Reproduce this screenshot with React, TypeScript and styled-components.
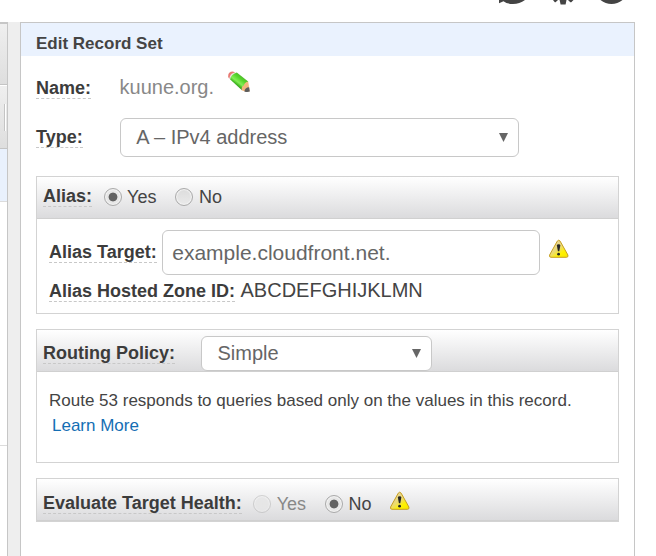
import React from "react";
import styled, { createGlobalStyle } from "styled-components";

const GlobalStyle = createGlobalStyle`
  * { box-sizing: border-box; }
  body {
    margin: 0;
    background: #fff;
    color: #444;
    font-family: "Liberation Sans", Arial, sans-serif;
    overflow: hidden;
  }
`;

const Page = styled.div`
  display: flex;
  flex-direction: column;
  width: 656px;
  height: 556px;
  overflow: hidden;
`;

const Toolbar = styled.div`
  display: flex;
  flex: none;
  height: 22px;
  padding-left: 498px;
`;

const ToolIcon = styled.svg<{ $gap?: number }>`
  display: block;
  flex: none;
  width: 28px;
  height: 6px;
  margin-right: ${(p) => p.$gap ?? 0}px;
`;

const Main = styled.div`
  display: flex;
  flex: 1;
  min-height: 0;
`;

const ListEdge = styled.div`
  display: flex;
  flex-direction: column;
  width: 8px;
  border-top: 2px solid #c6c6c6;
  border-right: 1px solid #c6c6c6;
`;

const HeadCell = styled.div<{ $h: number }>`
  display: flex;
  justify-content: flex-end;
  align-items: center;
  height: ${(p) => p.$h}px;
  padding-right: 1px;
  background: linear-gradient(#efefef, #dedede);
  border-bottom: 1px solid #c4c4c4;
  & + & { border-top: 1px solid #fff; }
`;

const Grip = styled.div`
  width: 2px;
  height: 27px;
  border-left: 1px solid #c4c4c4;
  border-right: 1px solid #fff;
`;

const ListRow = styled.div<{ $h: number; $selected?: boolean }>`
  height: ${(p) => p.$h}px;
  background: ${(p) => (p.$selected ? "#e9f1fd" : "#fff")};
  border-bottom: 1px solid #dcdcdc;
`;

const Gutter = styled.div`
  width: 12px;
  background: #eee;
`;

const Panel = styled.section`
  width: 615px;
  border: 1px solid #c6c6c6;
  border-bottom: 0;
`;

const PanelTitle = styled.h1`
  margin: 0;
  height: 33px;
  padding: 11px 15px 0;
  background: #eaf2fe;
  font-size: 17px;
  line-height: 20px;
`;

const Form = styled.div`
  padding: 0 15px;
`;

const Row = styled.div<{ $h: number }>`
  display: flex;
  align-items: flex-start;
  height: ${(p) => p.$h}px;
`;

const Label = styled.span<{ $top?: number }>`
  flex: none;
  height: 21px;
  margin-top: ${(p) => p.$top ?? 0}px;
  border-bottom: 1px dashed #c8c8c8;
  color: #3c3c3c;
  font-size: 18px;
  font-weight: bold;
  line-height: 20px;
  white-space: nowrap;
`;

const Value = styled.span<{ $top?: number; $left: number; $muted?: boolean }>`
  flex: none;
  margin: ${(p) => p.$top ?? 0}px 0 0 ${(p) => p.$left}px;
  color: ${(p) => (p.$muted ? "#888" : "#444")};
  font-size: 20px;
  line-height: 23px;
`;

const Select = styled.div<{ $w: number; $h: number; $left: number; $top?: number }>`
  display: flex;
  flex: none;
  align-items: center;
  justify-content: space-between;
  width: ${(p) => p.$w}px;
  height: ${(p) => p.$h}px;
  margin: ${(p) => p.$top ?? 0}px 0 0 ${(p) => p.$left}px;
  padding: 0 10px 0 15.5px;
  border: 1px solid #c8c8c8;
  border-radius: 6px;
  background: #fff;
  color: #666;
  font-size: 20px;
  line-height: 23px;
`;

const Arrow = styled.svg`
  display: block;
  width: 9px;
  height: 9px;
  margin-bottom: 1px;
`;

const TextField = styled.div`
  flex: none;
  width: 378px;
  height: 45px;
  margin: 11px 0 0 5px;
  padding: 0 9.5px;
  border: 1px solid #c8c8c8;
  border-radius: 6px;
  color: #666;
  font-size: 21px;
  line-height: 44px;
`;

const Box = styled.section<{ $h: number }>`
  height: ${(p) => p.$h}px;
  margin-bottom: 15px;
  border: 1px solid #d3d3d3;
`;

const BoxHead = styled.div`
  display: flex;
  align-items: flex-start;
  height: 42px;
  padding-left: 6px;
  border-bottom: 1px solid #d0d0d0;
  background: linear-gradient(#fff, #dbdbdd);
`;

const BoxBody = styled.div`
  padding-left: 12px;
`;

const RadioDot = styled.span<{ $on?: boolean }>`
  flex: none;
  width: 18px;
  height: 18px;
  border: 1px solid #aaa;
  border-radius: 50%;
  box-shadow: inset 0 0 1px 1px #f4f4f4;
  background: ${(p) =>
    p.$on
      ? "radial-gradient(circle, #626262 4px, transparent 4.8px), #e6e6e6"
      : "linear-gradient(#dcdcdc, #eaeaea)"};
`;

const RadioLabel = styled.label<{ $left: number; $top: number; $disabled?: boolean; $gap?: number }>`
  display: flex;
  flex: none;
  gap: ${(p) => p.$gap ?? 5}px;
  margin: ${(p) => p.$top}px 0 0 ${(p) => p.$left}px;
  color: ${(p) => (p.$disabled ? "#888" : "#444")};
  font-size: 18px;
  line-height: 18px;
  ${RadioDot} { opacity: ${(p) => (p.$disabled ? 0.45 : 1)}; }
`;

const IconBox = styled.svg<{ $w: number; $h: number; $left: number; $top: number }>`
  display: block;
  flex: none;
  width: ${(p) => p.$w}px;
  height: ${(p) => p.$h}px;
  margin: ${(p) => p.$top}px 0 0 ${(p) => p.$left}px;
`;

const Description = styled.p`
  margin: 0;
  padding-top: 16px;
  font-size: 17px;
  line-height: 25px;
`;

const Link = styled.a`
  display: block;
  margin-left: 3px;
  color: #146eb4;
`;

const Radio = ({ text, on, ...rest }: {
  text: string; on?: boolean; $left: number; $top: number; $disabled?: boolean; $gap?: number;
}) => (
  <RadioLabel {...rest}>
    <RadioDot $on={on} />
    {text}
  </RadioLabel>
);

const DownArrow = () => (
  <Arrow viewBox="0 0 9 9">
    <path d="M0 0H9L4.5 9Z" fill="#666" />
  </Arrow>
);

const Warning = ({ id, left, top }: { id: string; left: number; top: number }) => (
  <IconBox $w={20} $h={20} $left={left} $top={top} viewBox="0 0 20 20">
    <defs>
      <linearGradient id={id} x1="0.2" y1="0.2" x2="0.85" y2="1">
        <stop offset="0" stopColor="#e6d49c" />
        <stop offset="0.4" stopColor="#ecdb70" />
        <stop offset="0.7" stopColor="#fff200" />
        <stop offset="1" stopColor="#f8e800" />
      </linearGradient>
    </defs>
    <path
      d="M8.3 2.1Q9.7 0.3 11.1 2.1L18.9 16Q19.5 18.3 17.5 18.3H2Q0 18.3 .6 16Z"
      fill={`url(#${id})`}
      stroke="#c79f20"
    />
    <path d="M7.9 6.5Q7.9 5.2 9.6 5.2T11.3 6.5L10.3 12.3H8.9Z" fill="#252525" />
    <circle cx="9.6" cy="15.2" r="1.4" fill="#252525" />
  </IconBox>
);

const Pencil = () => (
  <IconBox $w={24} $h={24} $left={13} $top={14} viewBox="0 0 24 24">
    <defs>
      <linearGradient id="pencilBody" gradientUnits="userSpaceOnUse" x1="16" y1="6.5" x2="9" y2="15.5">
        <stop offset="0" stopColor="#4fb52c" />
        <stop offset="0.3" stopColor="#55d62a" />
        <stop offset="0.65" stopColor="#84ee55" />
        <stop offset="0.85" stopColor="#48bf25" />
        <stop offset="1" stopColor="#2f8f1b" />
      </linearGradient>
    </defs>
    <path d="M1.2 6.2Q1 1.6 6 1.6L8.4 2.8L3 8.8L1.6 8Z" fill="#e87872" />
    <path d="M2.4 8.2Q2.8 3.9 7.6 2.6L9.6 3.2L3.6 10Z" fill="#e9dfdd" />
    <path d="M3.2 9.4Q3.8 4.6 9.8 2.6L21.2 11.6L15 20.2Z" fill="url(#pencilBody)" />
    <path d="M14.7 20.2Q14.4 16.2 16.9 15.6Q17.4 12.4 21.2 11.6L22.7 21.3Q18.6 22.2 14.7 20.2Z" fill="#f1b67e" />
    <path d="M17.4 21.4Q17.8 17.4 22.1 17.2L22.8 21.5Q20 22.4 17.4 21.4Z" fill="#5c5c5c" />
  </IconBox>
);

const TopIcons = () => (
  <Toolbar>
    <ToolIcon $gap={22} viewBox="0 0 28 6">
      <path d="M1 0H27Q21.5 4 15 4Q9 4 5.5 1.2L1 3.2Z" fill="#444" />
    </ToolIcon>
    <ToolIcon $gap={21} viewBox="0 0 28 6">
      <path d="M5 0H10L7.6 2.2H6.8ZM11.6 0H18.5L17.6 4.5H12.6ZM20 0H25.5L23.3 2.2H22.3Z" fill="#444" />
    </ToolIcon>
    <ToolIcon viewBox="0 0 28 6">
      <path d="M3.5 0H25.5Q20.5 4 14.5 4T3.5 0Z" fill="#444" />
    </ToolIcon>
  </Toolbar>
);

export default function App() {
  return (
    <Page>
      <GlobalStyle />
      <TopIcons />
      <Main>
        <ListEdge>
          <HeadCell $h={61} />
          <HeadCell $h={64}><Grip /></HeadCell>
          <ListRow $h={53} $selected />
          <ListRow $h={244} />
        </ListEdge>
        <Gutter />
        <Panel>
          <PanelTitle>Edit Record Set</PanelTitle>
          <Form>
            <Row $h={62}>
              <Label $top={22}>Name:</Label>
              <Value $top={20} $left={28.5} $muted>kuune.org.</Value>
              <Pencil />
            </Row>
            <Row $h={58}>
              <Label $top={9}>Type:</Label>
              <Select $w={399} $h={39} $left={37}>A – IPv4 address<DownArrow /></Select>
            </Row>
            <Box $h={138}>
              <BoxHead>
                <Label $top={9}>Alias:</Label>
                <Radio text="Yes" on $left={12} $top={11} />
                <Radio text="No" $left={19} $top={11} $gap={5.5} />
              </BoxHead>
              <BoxBody>
                <Row $h={62}>
                  <Label $top={23}>Alias Target:</Label>
                  <TextField>example.cloudfront.net.</TextField>
                  <Warning id="warnTarget" left={9} top={20} />
                </Row>
                <Row $h={31}>
                  <Label>Alias Hosted Zone ID:</Label>
                  <Value $top={-2} $left={5.5}>ABCDEFGHIJKLMN</Value>
                </Row>
              </BoxBody>
            </Box>
            <Box $h={134}>
              <BoxHead>
                <Label $top={13}>Routing Policy:</Label>
                <Select $w={231} $h={35} $left={26} $top={6}>Simple<DownArrow /></Select>
              </BoxHead>
              <BoxBody>
                <Description>
                  Route 53 responds to queries based only on the values in this record.
                  <Link>Learn More</Link>
                </Description>
              </BoxBody>
            </Box>
            <Box $h={44}>
              <BoxHead>
                <Label $top={14}>Evaluate Target Health:</Label>
                <Radio text="Yes" $left={11} $top={16} $gap={6} $disabled />
                <Radio text="No" on $left={19} $top={16} $gap={5.5} />
                <Warning id="warnHealth" left={18} top={12} />
              </BoxHead>
            </Box>
          </Form>
        </Panel>
      </Main>
    </Page>
  );
}
